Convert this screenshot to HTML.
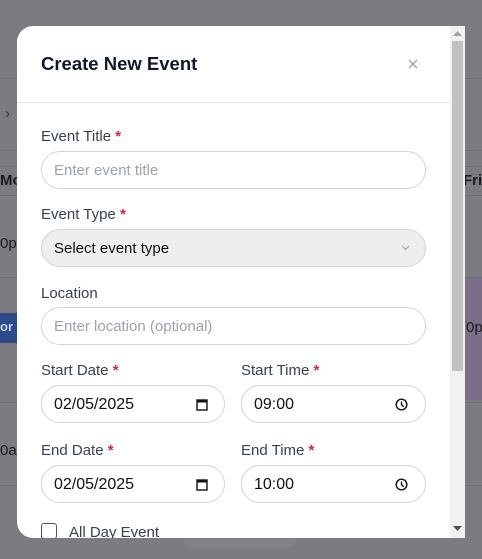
<!DOCTYPE html>
<html><head><style>
*{box-sizing:border-box;margin:0;padding:0}
body{width:482px;height:559px;overflow:hidden;background:#7b7b80;font-family:"Liberation Sans",sans-serif;position:relative}
.a{position:absolute}
.ln{position:absolute;left:0;width:482px;height:1px;background:#6f6f74}
.bg{color:#1a1a1f;font-size:15px}
.modal{position:absolute;left:17px;top:26px;width:448px;height:512px;background:#fff;border-radius:16px 0 0 16px;overflow:hidden}
.lbl{position:absolute;font-size:15px;color:#374151;line-height:16px}
.lbl b{color:#e11d48;font-weight:bold}
.inp{position:absolute;height:38px;border:1px solid #d1d5db;border-radius:19px;background:#fff;font-size:15px;line-height:38px;padding-left:12px;color:#111}
.ph{color:#9ca3af}
</style></head><body>
<div class="ln" style="top:78px"></div>
<div class="ln" style="top:150px"></div>
<div class="ln" style="top:166px"></div>
<div class="ln" style="top:195px"></div>
<div class="ln" style="top:277px"></div>
<div class="ln" style="top:402px"></div>
<div class="ln" style="top:485px"></div>
<div class="a bg" style="left:5px;top:105px;color:#333">›</div>
<div class="a bg" style="left:0;top:172px;font-weight:bold">Mo</div>
<div class="a bg" style="left:0;top:235px">0p</div>
<div class="a" style="left:0;top:313px;width:17px;height:30px;background:#2f4a8a"></div>
<div class="a bg" style="left:0;top:319px;color:#c9d0e6;font-weight:bold;font-size:13px">or</div>
<div class="a bg" style="left:0;top:442px">0a</div>
<div class="a bg" style="left:463px;top:172px;font-weight:bold">Fri</div>
<div class="a" style="left:465px;top:278px;width:17px;height:122px;background:#7a6e88"></div>
<div class="a bg" style="left:466px;top:319px">0p</div>
<div class="a" style="left:183px;top:538px;width:113px;height:10px;background:#818186;border-radius:0 0 6px 6px"></div>

<div class="modal">
  <div class="a" style="left:24px;top:27px;font-size:18.5px;font-weight:bold;color:#111827">Create New Event</div>
  <svg class="a" style="left:391px;top:33px" width="10" height="10" viewBox="0 0 10 10"><path d="M1 1L9 9M9 1L1 9" stroke="#9ca3af" stroke-width="1.3"/></svg>
  <div class="a" style="left:0;top:76px;width:433px;height:1px;background:#e5e7eb"></div>

  <div class="lbl" style="left:24px;top:103px">Event Title <b>*</b></div>
  <div class="inp ph" style="left:24px;top:125px;width:385px">Enter event title</div>

  <div class="lbl" style="left:24px;top:181px">Event Type <b>*</b></div>
  <div class="inp" style="left:24px;top:203px;width:385px;background:#eeeeee">Select event type
    <svg class="a" style="right:15px;top:15px" width="9" height="6" viewBox="0 0 9 6"><path d="M1 1L4.5 4.5L8 1" stroke="#9ca3af" fill="none" stroke-width="1.2"/></svg></div>

  <div class="lbl" style="left:24px;top:260px">Location</div>
  <div class="inp ph" style="left:24px;top:281px;width:385px">Enter location (optional)</div>

  <div class="lbl" style="left:24px;top:337px">Start Date <b>*</b></div>
  <div class="lbl" style="left:224px;top:337px">Start Time <b>*</b></div>
  <div class="inp" style="left:24px;top:359px;width:184px;font-size:16px">02/05/2025
    <svg class="a" style="left:154px;top:12px" width="12" height="13" viewBox="0 0 12 13"><rect x="1" y="2" width="10" height="10" fill="none" stroke="#111" stroke-width="1.4"/><rect x="1" y="2" width="10" height="2.5" fill="#111"/></svg></div>
  <div class="inp" style="left:224px;top:359px;width:185px;font-size:16px">09:00
    <svg class="a" style="left:153px;top:12px" width="13" height="13" viewBox="0 0 13 13"><circle cx="6.5" cy="6.5" r="5.3" fill="none" stroke="#111" stroke-width="1.4"/><path d="M6.5 3.5V6.8L8.8 8.6" stroke="#111" fill="none" stroke-width="1.3"/></svg></div>

  <div class="lbl" style="left:24px;top:417px">End Date <b>*</b></div>
  <div class="lbl" style="left:224px;top:417px">End Time <b>*</b></div>
  <div class="inp" style="left:24px;top:439px;width:184px;font-size:16px">02/05/2025
    <svg class="a" style="left:154px;top:12px" width="12" height="13" viewBox="0 0 12 13"><rect x="1" y="2" width="10" height="10" fill="none" stroke="#111" stroke-width="1.4"/><rect x="1" y="2" width="10" height="2.5" fill="#111"/></svg></div>
  <div class="inp" style="left:224px;top:439px;width:185px;font-size:16px">10:00
    <svg class="a" style="left:153px;top:12px" width="13" height="13" viewBox="0 0 13 13"><circle cx="6.5" cy="6.5" r="5.3" fill="none" stroke="#111" stroke-width="1.4"/><path d="M6.5 3.5V6.8L8.8 8.6" stroke="#111" fill="none" stroke-width="1.3"/></svg></div>

  <div class="a" style="left:24px;top:497px;width:16px;height:16px;border:1.5px solid #555;border-radius:3px"></div>
  <div class="a" style="left:52px;top:498px;font-size:15px;color:#374151">All Day Event</div>

  <div class="a" style="left:433px;top:0;width:15px;height:512px;background:#f1f1f1"></div>
  <div class="a" style="left:435px;top:15px;width:11px;height:330px;background:#c1c1c1"></div>
  <svg class="a" style="left:436px;top:5px" width="9" height="6"><path d="M0 5L4.5 0L9 5Z" fill="#a3a3a3"/></svg>
  <svg class="a" style="left:436px;top:500px" width="9" height="6"><path d="M0 0L4.5 5L9 0Z" fill="#505050"/></svg>
</div>
</body></html>
